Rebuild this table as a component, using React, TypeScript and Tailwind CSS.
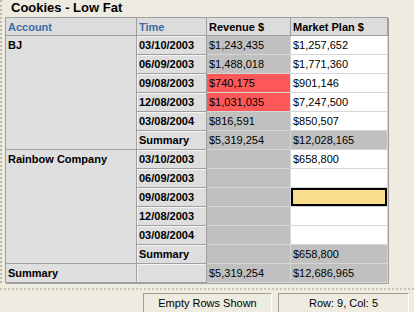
type Tone = 'gray' | 'white' | 'red' | 'selected'

interface Row {
  time: string
  revenue: string
  revenueTone: Tone
  plan: string
  planTone: Tone
}

const bjRows: Row[] = [
  { time: '03/10/2003', revenue: '$1,243,435', revenueTone: 'gray', plan: '$1,257,652', planTone: 'white' },
  { time: '06/09/2003', revenue: '$1,488,018', revenueTone: 'gray', plan: '$1,771,360', planTone: 'white' },
  { time: '09/08/2003', revenue: '$740,175', revenueTone: 'red', plan: '$901,146', planTone: 'white' },
  { time: '12/08/2003', revenue: '$1,031,035', revenueTone: 'red', plan: '$7,247,500', planTone: 'white' },
  { time: '03/08/2004', revenue: '$816,591', revenueTone: 'gray', plan: '$850,507', planTone: 'white' },
  { time: 'Summary', revenue: '$5,319,254', revenueTone: 'gray', plan: '$12,028,165', planTone: 'gray' },
]

const rainbowRows: Row[] = [
  { time: '03/10/2003', revenue: '', revenueTone: 'gray', plan: '$658,800', planTone: 'white' },
  { time: '06/09/2003', revenue: '', revenueTone: 'gray', plan: '', planTone: 'white' },
  { time: '09/08/2003', revenue: '', revenueTone: 'gray', plan: '', planTone: 'selected' },
  { time: '12/08/2003', revenue: '', revenueTone: 'gray', plan: '', planTone: 'white' },
  { time: '03/08/2004', revenue: '', revenueTone: 'gray', plan: '', planTone: 'white' },
  { time: 'Summary', revenue: '', revenueTone: 'gray', plan: '$658,800', planTone: 'gray' },
]

const toneClass: Record<Tone, string> = {
  gray: 'bg-[#c0c0c0]',
  white: 'bg-white',
  red: 'bg-[#ff5858]',
  selected: 'bg-[#f9dc8c] shadow-[inset_0_0_0_2px_#000]',
}

function HeaderCell({ label, blue }: { label: string; blue?: boolean }) {
  return (
    <div
      className={`bg-[#dcdcdc] border-r border-b border-[#a0a0a0] pl-[2px] font-bold leading-[18px] ${blue ? 'text-[#3d6ba6]' : 'text-black'}`}
    >
      {label}
    </div>
  )
}

function AccountCell({ label, span6 }: { label: string; span6?: boolean }) {
  return (
    <div
      className={`bg-[#dfdfdf] border-r border-b border-[#a0a0a0] pl-[2px] font-bold leading-[18px] col-start-1 ${span6 ? 'row-span-6' : ''}`}
    >
      {label}
    </div>
  )
}

function TimeCell({ label }: { label: string }) {
  return (
    <div className="bg-[#dedede] border-r border-b border-[#a0a0a0] pl-[2px] font-bold leading-[18px] shadow-[inset_1px_1px_0_#f4f4f4]">
      {label}
    </div>
  )
}

function DataCell({ value, tone }: { value: string; tone: Tone }) {
  return (
    <div className={`border-r border-b border-[#d6d6d6] pl-[2px] leading-[18px] ${toneClass[tone]}`}>
      {value}
    </div>
  )
}

function DataRow({ row }: { row: Row }) {
  return (
    <>
      <TimeCell label={row.time} />
      <DataCell value={row.revenue} tone={row.revenueTone} />
      <DataCell value={row.plan} tone={row.planTone} />
    </>
  )
}

function StatusPanel({ text, width }: { text: string; width: string }) {
  return (
    <div
      className={`${width} h-[20px] border-t border-l border-[#a19f94] border-b border-r border-b-white border-r-white text-center leading-[18px]`}
    >
      {text}
    </div>
  )
}

export default function App() {
  return (
    <div className="w-[414px] h-[312px] overflow-hidden bg-[#eeebe0] font-['Liberation_Sans',_Arial,_sans-serif] text-[11px] text-black flex flex-col">
      <div className="flex flex-col border-l-2 border-dotted border-[#bdb9a6] h-[283px]">
        <div className="h-[17px] pl-[9px] text-[13px] font-bold leading-[16px]">Cookies - Low Fat</div>
        <div className="ml-[3px] w-[383px] grid grid-cols-[131px_70px_84px_97px] grid-rows-[18px_repeat(13,19px)] border-t border-l border-[#a0a0a0] shadow-[1px_1px_0_#a0a0a0]">
          <HeaderCell label="Account" blue />
          <HeaderCell label="Time" blue />
          <HeaderCell label="Revenue $" />
          <HeaderCell label="Market Plan $" />

          <AccountCell label="BJ" span6 />
          {bjRows.map((row, i) => (
            <DataRow key={`bj-${i}`} row={row} />
          ))}

          <AccountCell label="Rainbow Company" span6 />
          {rainbowRows.map((row, i) => (
            <DataRow key={`rb-${i}`} row={row} />
          ))}

          <AccountCell label="Summary" />
          <TimeCell label="" />
          <DataCell value="$5,319,254" tone="gray" />
          <DataCell value="$12,686,965" tone="gray" />
        </div>
      </div>

      <div className="mt-[5px] border-t-2 border-dotted border-[#c9c5b2]" />

      <div className="mt-[3px] flex justify-end gap-[6px] pr-[5px]">
        <StatusPanel text="Empty Rows Shown" width="w-[129px]" />
        <StatusPanel text="Row: 9, Col: 5" width="w-[131px]" />
      </div>
    </div>
  )
}
